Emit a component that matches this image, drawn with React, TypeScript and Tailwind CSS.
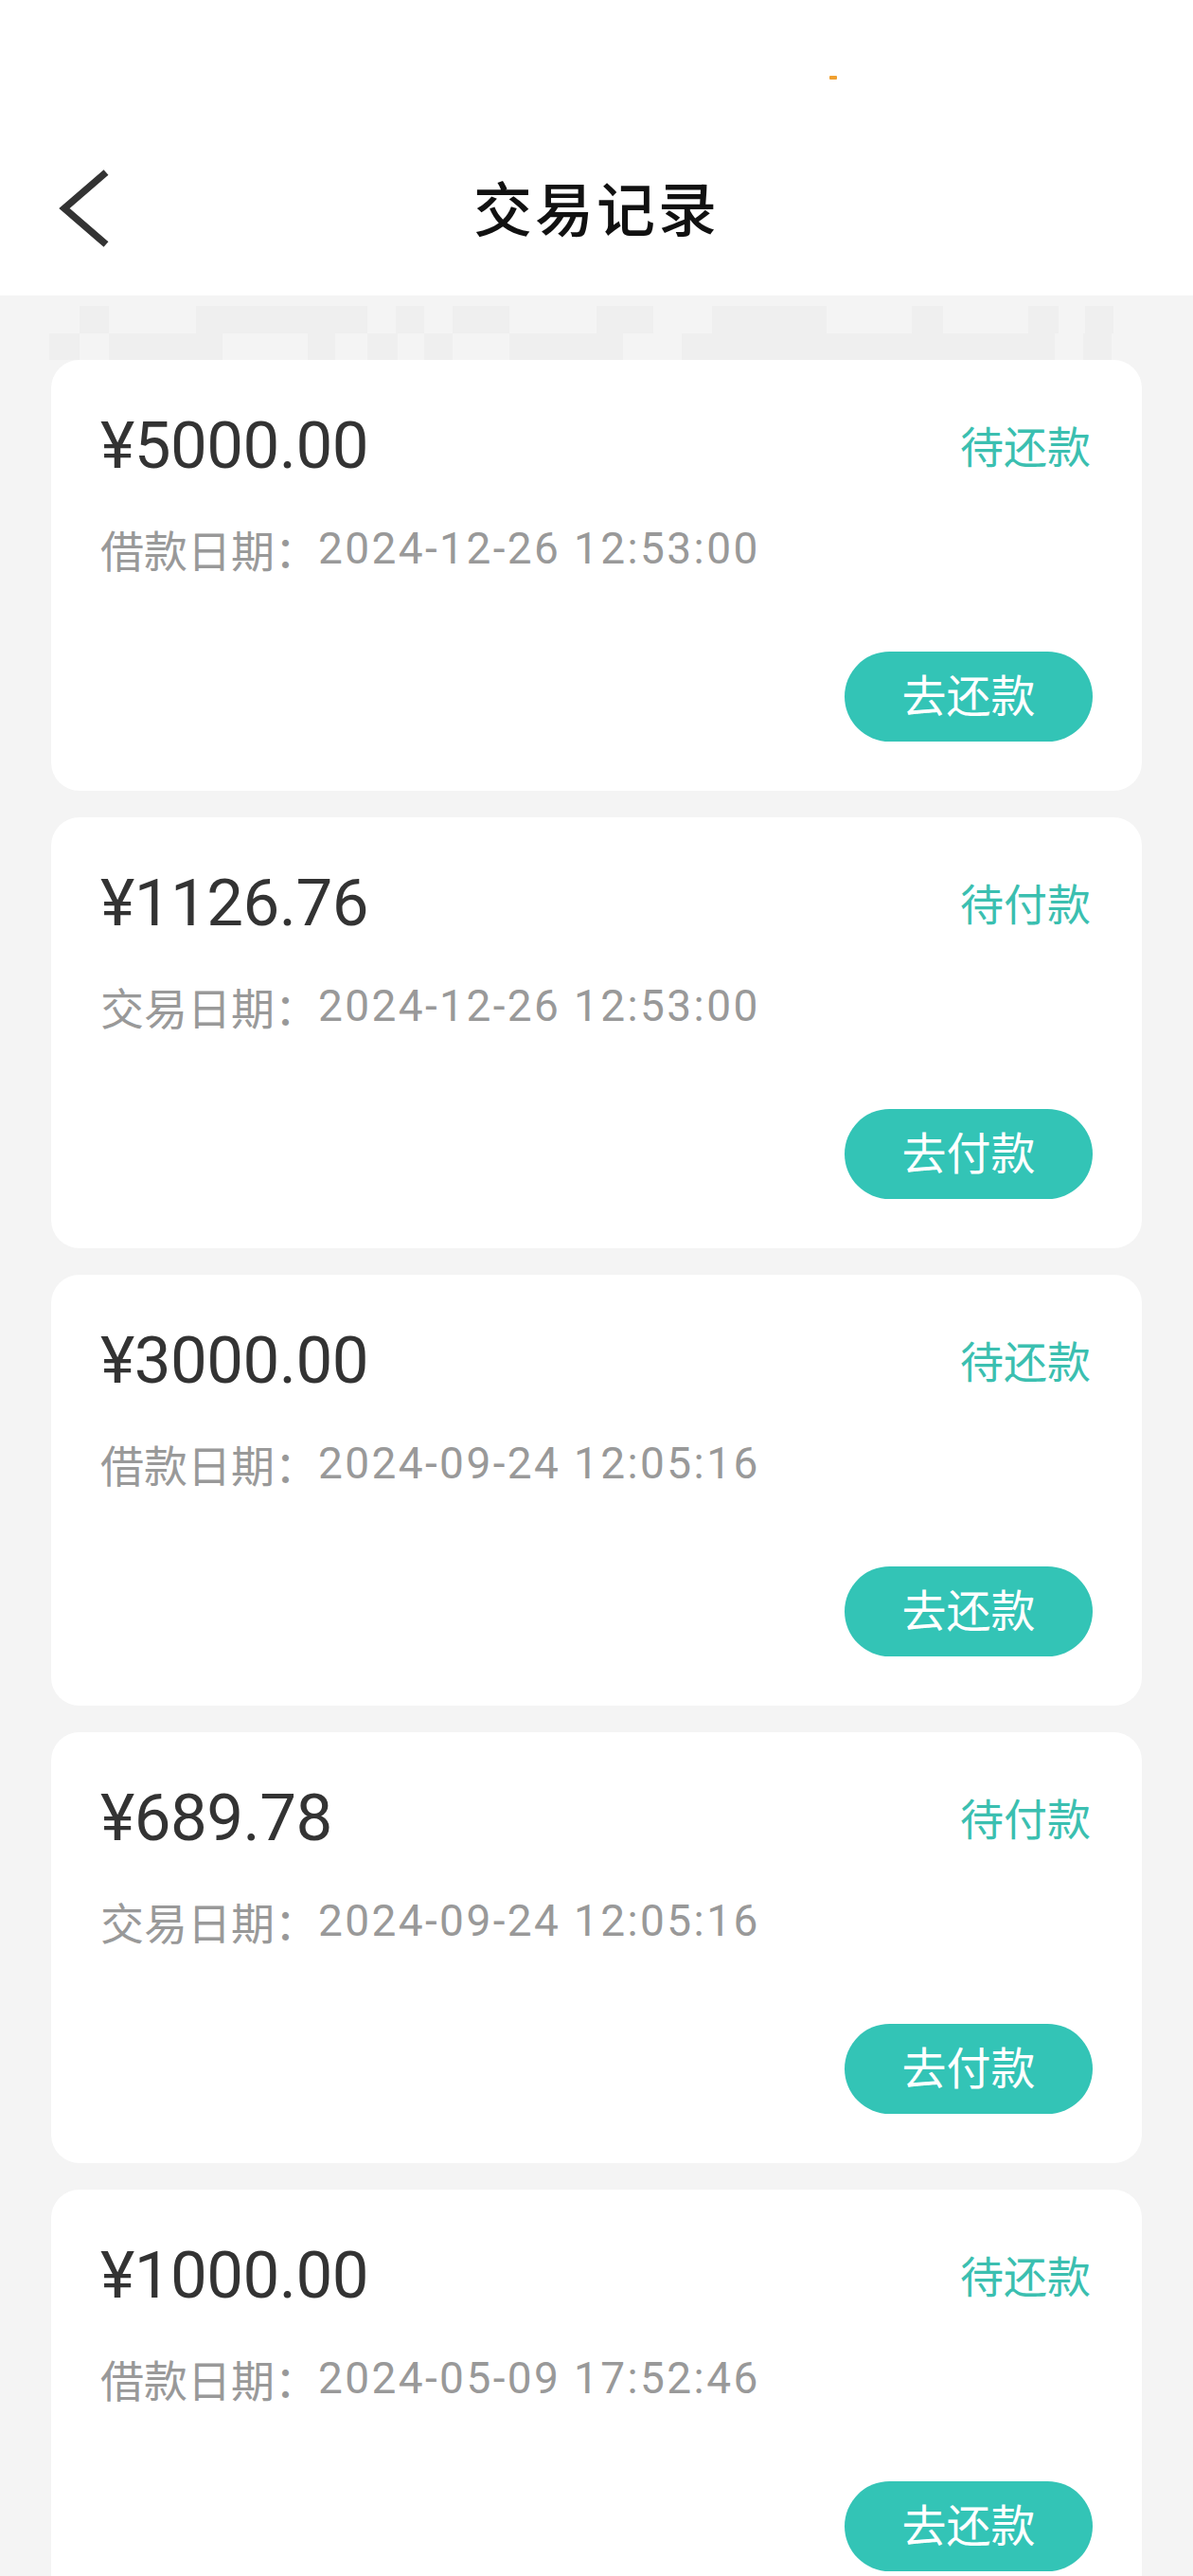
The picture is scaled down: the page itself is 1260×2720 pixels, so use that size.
import React from "react";

type Rec = { amount: string; label: string; date: string; status: string; action: string };

const records: Rec[] = [
  { amount: "¥5000.00", label: "借款日期：", date: "2024-12-26 12:53:00", status: "待还款", action: "去还款" },
  { amount: "¥1126.76", label: "交易日期：", date: "2024-12-26 12:53:00", status: "待付款", action: "去付款" },
  { amount: "¥3000.00", label: "借款日期：", date: "2024-09-24 12:05:16", status: "待还款", action: "去还款" },
  { amount: "¥689.78", label: "交易日期：", date: "2024-09-24 12:05:16", status: "待付款", action: "去付款" },
  { amount: "¥1000.00", label: "借款日期：", date: "2024-05-09 17:52:46", status: "待还款", action: "去还款" },
];

const row1 = [
  [84, 0], [31, 1], [92, 0], [181, 1], [30, 0], [30, 1], [30, 0], [60, 1], [92, 0], [60, 1], [62, 0], [121, 1], [90, 0], [33, 1], [90, 0], [32, 1], [28, 0], [30, 1],
];
const row2 = [
  [52, 0], [32, 1], [31, 0], [120, 1], [90, 0], [29, 1], [34, 0], [32, 1], [28, 0], [30, 1], [60, 0], [120, 1], [62, 0], [93, 1], [301, 1], [30, 0], [30, 1],
];

function Card({ r }: { r: Rec }) {
  return (
    <div className="bg-white rounded-[30px] px-[52px] pt-[50px] pb-[52px] flex flex-col">
      <div className="flex items-center justify-between h-[80px]">
        <span
          className="text-[69px] leading-[80px] text-[#333333] tracking-[-0.5px] pt-[2px]"
          style={{ fontFamily: "Roboto, 'Noto Sans', sans-serif" }}
        >
          {r.amount}
        </span>
        <span
          className="text-[46px] leading-[60px] text-[#3bbfb0] mr-[2px] pb-[2px]"
          style={{ fontFamily: "'Noto Sans CJK SC', sans-serif" }}
        >
          {r.status}
        </span>
      </div>
      <div
        className="mt-[38px] h-[60px] leading-[60px] text-[46px] text-[#999999] flex items-center pt-[2px]"
        style={{ fontFamily: "'Noto Sans CJK SC', sans-serif" }}
      >
        <span>{r.label}</span>
        <span className="tracking-[2.4px]" style={{ fontFamily: "Roboto, 'Noto Sans CJK SC', sans-serif" }}>
          {r.date}
        </span>
      </div>
      <div className="mt-[80px] flex justify-end">
        <div
          className="w-[262px] h-[95px] rounded-full bg-[#33c4b6] text-white text-[47px] flex items-center justify-center pb-[7px]"
          style={{ fontFamily: "'Noto Sans CJK SC', sans-serif" }}
        >
          {r.action}
        </div>
      </div>
    </div>
  );
}

export default function App() {
  return (
    <div className="w-[1260px] h-[2720px] overflow-hidden bg-[#f4f4f4] flex flex-col">
      <div className="bg-white h-[312px] flex flex-col shrink-0">
        <div className="h-[160px] relative">
          <div className="absolute left-[876px] top-[80px] w-[8px] h-[4px] bg-[#f0a030] rounded-[1px]" />
        </div>
        <div className="relative h-[120px] flex items-center justify-center">
          <svg
            className="absolute left-[58px] top-[18px]"
            width="64"
            height="84"
            viewBox="0 0 64 84"
            fill="none"
          >
            <path d="M54 4 L10 42 L54 80" stroke="#333333" strokeWidth="7.5" strokeLinecap="butt" strokeLinejoin="miter" />
          </svg>
          <span
            className="text-[62px] leading-[80px] text-[#111111] font-medium tracking-[3px] pb-[4px]"
            style={{ fontFamily: "'Noto Sans CJK SC', sans-serif" }}
          >
            交易记录
          </span>
        </div>
      </div>
      <div className="h-[68px] flex flex-col pt-[11px] shrink-0">
        <div className="flex h-[29px]">
          {row1.map(([w, d], i) => (
            <div key={i} style={{ width: w }} className={d ? "bg-[#efefef]" : ""} />
          ))}
        </div>
        <div className="flex h-[28px]">
          {row2.map(([w, d], i) => (
            <div key={i} style={{ width: w }} className={d ? "bg-[#efefef]" : ""} />
          ))}
        </div>
      </div>
      <div className="px-[54px] flex flex-col gap-[28px]">
        {records.map((r, i) => (
          <Card key={i} r={r} />
        ))}
      </div>
    </div>
  );
}
